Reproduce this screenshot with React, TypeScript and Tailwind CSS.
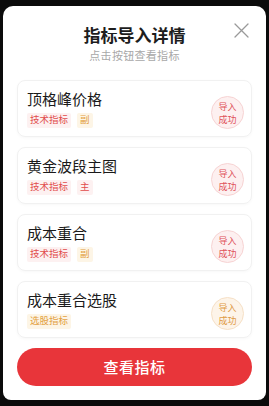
import React from 'react';

type Tag = { text: string; tone: 'red' | 'orange' };
type Item = { name: string; tags: Tag[]; tone: 'red' | 'orange' };

const items: Item[] = [
    { name: '顶格峰价格', tags: [{ text: '技术指标', tone: 'red' }, { text: '副', tone: 'orange' }], tone: 'red' },
    { name: '黄金波段主图', tags: [{ text: '技术指标', tone: 'red' }, { text: '主', tone: 'red' }], tone: 'red' },
    { name: '成本重合', tags: [{ text: '技术指标', tone: 'red' }, { text: '副', tone: 'orange' }], tone: 'red' },
    { name: '成本重合选股', tags: [{ text: '选股指标', tone: 'orange' }], tone: 'orange' },
];

function TagChip({ tag }: { tag: Tag }) {
    const cls = tag.tone === 'red'
        ? 'bg-[#fdf1f1] text-[#e14b4b]'
        : 'bg-[#fdf5e6] text-[#e3a041]';
    return (
        <span className={`px-[3px] h-[15px] flex items-center text-[9.5px] leading-none rounded-[2px] ${cls}`}>
            {tag.text}
        </span>
    );
}

function Badge({ tone }: { tone: 'red' | 'orange' }) {
    const cls = tone === 'red'
        ? 'bg-[#fdf0f0] border-[#f7d3d3] text-[#e0525a]'
        : 'bg-[#fdf4e9] border-[#f6e0c6] text-[#df9a44]';
    return (
        <div className={`w-[33px] h-[33px] mt-[8px] rounded-full border flex flex-col items-center justify-center text-[9px] leading-[13px] ${cls}`}>
            <span>导入</span>
            <span>成功</span>
        </div>
    );
}

export default function App() {
    return (
        <div className="w-[269px] h-[406px] bg-[#0b0b0b] pt-[6px] px-[3px] overflow-hidden" style={{ fontFamily: '"Noto Sans CJK SC", "Noto Sans", sans-serif' }}>
            <div className="relative w-[263px] h-[394px] bg-white rounded-t-[10px] rounded-b-[8px] px-[14px] flex flex-col">
                {/* header */}
                <div className="pt-[18px] flex flex-col items-center">
                    <h1 className="text-[17px] leading-[21px] font-bold text-[#1d1d1d]">指标导入详情</h1>
                    <p className="mt-[3px] text-[11px] leading-[14px] text-[#a8a8a8] tracking-[0.3px]">点击按钮查看指标</p>
                </div>
                <button className="absolute left-[231px] top-[17px] w-[15px] h-[15px]">
                    <svg viewBox="0 0 15 15" width="15" height="15" fill="none" stroke="#9a9a9a" strokeWidth="1.3" strokeLinecap="round">
                        <path d="M1 1 L14 14 M14 1 L1 14" />
                    </svg>
                </button>

                {/* list */}
                <div className="mt-[18px] flex flex-col gap-[10px]">
                    {items.map(it => (
                        <div key={it.name} className="h-[57px] border border-[#f1f1f1] rounded-[8px] shadow-[0_1px_3px_rgba(0,0,0,0.03)] pl-[9px] pr-[7px] flex justify-between items-center">
                            <div className="flex flex-col">
                                <span className="text-[15px] leading-[18px] text-[#1a1a1a]">{it.name}</span>
                                <div className="mt-[5px] flex gap-[6px]">
                                    {it.tags.map(t => <TagChip key={t.text} tag={t} />)}
                                </div>
                            </div>
                            <Badge tone={it.tone} />
                        </div>
                    ))}
                </div>

                <button className="mt-[10px] h-[38px] w-full rounded-full bg-[#e8353a] text-white text-[15px] font-medium tracking-[0.5px]">
                    查看指标
                </button>
            </div>
        </div>
    );
}
